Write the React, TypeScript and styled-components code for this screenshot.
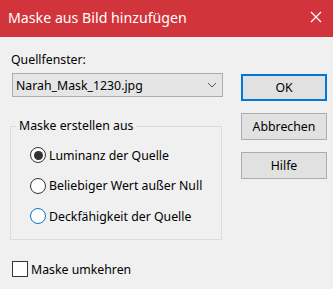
import React from "react";
import styled, { createGlobalStyle } from "styled-components";

const Global = createGlobalStyle`
  html, body { margin: 0; padding: 0; background: #f0f0f0; }
  body { font-family: "Noto Sans", "Liberation Sans", sans-serif; }
`;

const Window = styled.div`
  width: 333px;
  height: 289px;
  background: #f0f0f0;
  color: #000;
  font-size: 12.3px;
  overflow: hidden;
`;

const TitleBar = styled.div`
  height: 37px;
  background: #d1343a;
  color: #fff;
  display: flex;
  align-items: center;
  justify-content: space-between;
  padding: 0 11px 0 8px;
  font-size: 14.2px;
`;

const Title = styled.span`
  line-height: 20px;
  margin-top: -2px;
`;

const CloseIcon = styled.svg`
  width: 12px;
  height: 12px;
  margin-top: -3px;
`;

const Content = styled.div`
  display: flex;
  padding: 15px 0 0 10px;
`;

const LeftCol = styled.div`
  width: 213px;
  display: flex;
  flex-direction: column;
`;

const RightCol = styled.div`
  margin-left: 18px;
  margin-top: 22px;
  width: 86px;
  display: flex;
  flex-direction: column;
  gap: 12px;
`;

const FieldLabel = styled.div`
  line-height: 16px;
  margin-left: 1px;
`;

const Combo = styled.div`
  margin: 5px 0 0 2px;
  width: 211px;
  height: 24px;
  box-sizing: border-box;
  background: #e5e5e5;
  border: 1px solid #adadad;
  display: flex;
  align-items: center;
  justify-content: space-between;
  padding: 0 5px 0 3px;
`;

const Chevron = styled.svg`
  width: 10px;
  height: 6px;
`;

const GroupBox = styled.fieldset`
  margin: 21px 0 0 0;
  width: 212px;
  box-sizing: border-box;
  border: 1px solid #dcdcdc;
  padding: 6px 0 7px 0;
  display: grid;
  grid-auto-rows: 30.5px;
`;

const Legend = styled.legend`
  margin-left: 5px;
  padding: 0 3px;
  line-height: 16px;
`;

const RadioRow = styled.label`
  display: flex;
  align-items: center;
  gap: 3px;
  padding-left: 19px;
`;

const RadioCircle = styled.span<{ $checked?: boolean; $focus?: boolean }>`
  width: 16px;
  height: 16px;
  box-sizing: border-box;
  border-radius: 50%;
  border: 1px solid ${(p) => (p.$focus ? "#0078d7" : "#333")};
  background: #fff;
  display: flex;
  align-items: center;
  justify-content: center;
  &::after {
    content: "";
    width: 9px;
    height: 9px;
    border-radius: 50%;
    background: ${(p) => (p.$checked ? "#333" : "transparent")};
  }
`;

const CheckRow = styled.label`
  display: flex;
  align-items: center;
  gap: 3px;
  margin: 21px 0 0 2px;
`;

const CheckBox = styled.span`
  width: 16px;
  height: 16px;
  box-sizing: border-box;
  border: 1px solid #333;
  background: #fff;
`;

const Button = styled.button<{ $default?: boolean }>`
  height: 27px;
  width: 86px;
  box-sizing: border-box;
  background: #e1e1e1;
  border: ${(p) => (p.$default ? "2px solid #0078d7" : "1px solid #adadad")};
  font-family: inherit;
  font-size: inherit;
  color: #000;
  padding: 0;
`;

export default function App() {
  return (
    <Window>
      <Global />
      <TitleBar>
        <Title>Maske aus Bild hinzufügen</Title>
        <CloseIcon viewBox="0 0 12 12">
          <path d="M1 1 L11 11 M11 1 L1 11" stroke="#fff" strokeWidth="1.2" />
        </CloseIcon>
      </TitleBar>
      <Content>
        <LeftCol>
          <FieldLabel>Quellfenster:</FieldLabel>
          <Combo>
            <span>Narah_Mask_1230.jpg</span>
            <Chevron viewBox="0 0 10 6">
              <path d="M1 1 L5 5 L9 1" fill="none" stroke="#555" strokeWidth="1" />
            </Chevron>
          </Combo>
          <GroupBox>
            <Legend>Maske erstellen aus</Legend>
            <RadioRow>
              <RadioCircle $checked />
              Luminanz der Quelle
            </RadioRow>
            <RadioRow>
              <RadioCircle />
              Beliebiger Wert außer Null
            </RadioRow>
            <RadioRow>
              <RadioCircle $focus />
              Deckfähigkeit der Quelle
            </RadioRow>
          </GroupBox>
          <CheckRow>
            <CheckBox />
            Maske umkehren
          </CheckRow>
        </LeftCol>
        <RightCol>
          <Button $default>OK</Button>
          <Button>Abbrechen</Button>
          <Button>Hilfe</Button>
        </RightCol>
      </Content>
    </Window>
  );
}
